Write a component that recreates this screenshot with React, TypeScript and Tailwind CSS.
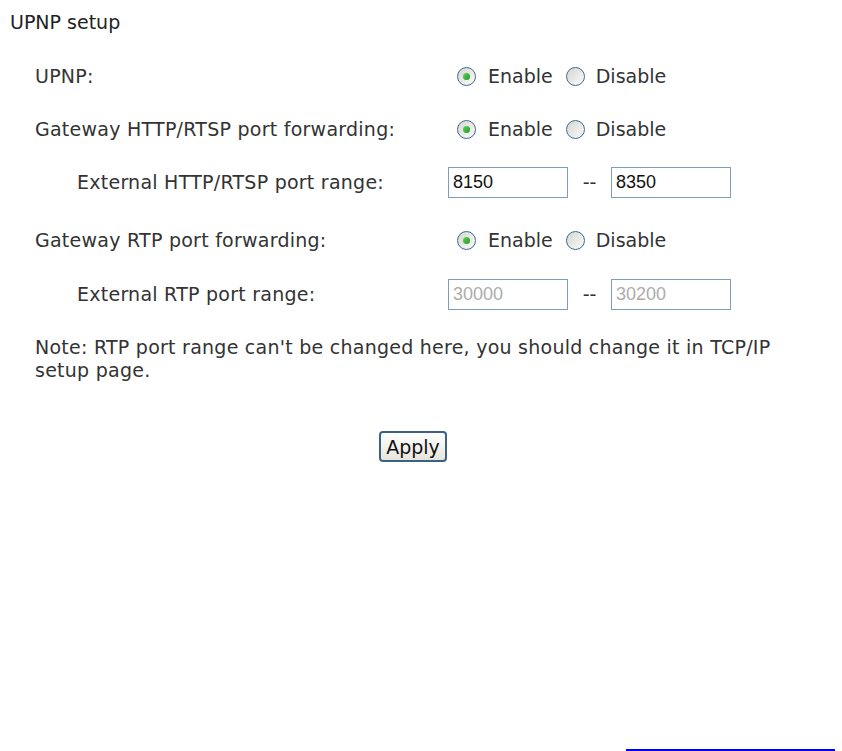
import { useState } from "react";

type Choice = "enable" | "disable";

function Radio({ checked, onClick }: { checked: boolean; onClick: () => void }) {
  return (
    <span
      onClick={onClick}
      className="w-[19px] h-[19px] rounded-full border-[1.5px] border-[#3f6a93] bg-gradient-to-br from-[#d6d6d0] to-[#fbfbfa] flex items-center justify-center cursor-pointer shrink-0"
    >
      {checked && (
        <span className="w-[7px] h-[7px] rounded-full bg-gradient-to-br from-[#5fd35f] to-[#1d9a1d]" />
      )}
    </span>
  );
}

function RadioPair({ value, onChange }: { value: Choice; onChange: (v: Choice) => void }) {
  return (
    <div className="flex items-center">
      <Radio checked={value === "enable"} onClick={() => onChange("enable")} />
      <span className="ml-[12px]">Enable</span>
      <span className="ml-[13px]">
        <Radio checked={value === "disable"} onClick={() => onChange("disable")} />
      </span>
      <span className="ml-[11px]">Disable</span>
    </div>
  );
}

function PortInput({ value, disabled }: { value: string; disabled?: boolean }) {
  return (
    <input
      defaultValue={value}
      disabled={disabled}
      className={
        "w-[120px] h-[31px] border border-[#7f9db9] bg-white pl-[4px] text-[18px] outline-none " +
        (disabled ? "text-[#acacac]" : "text-[#111]")
      }
      style={{ fontFamily: '"Liberation Sans", Arial, sans-serif' }}
    />
  );
}

function PortRange({ from, to, disabled }: { from: string; to: string; disabled?: boolean }) {
  return (
    <div className="flex items-center">
      <PortInput value={from} disabled={disabled} />
      <span className="w-[43px] text-center">--</span>
      <PortInput value={to} disabled={disabled} />
    </div>
  );
}

export default function App() {
  const [upnp, setUpnp] = useState<Choice>("enable");
  const [http, setHttp] = useState<Choice>("enable");
  const [rtp, setRtp] = useState<Choice>("enable");

  return (
    <div
      className="h-[751px] flex flex-col bg-white text-[19px] text-[#333] overflow-hidden"
      style={{ fontFamily: '"DejaVu Sans", Verdana, sans-serif' }}
    >
      <div className="h-[32px] mt-[6px] pl-[10px] flex items-center text-[#222]">UPNP setup</div>

      <div className="mt-[22px] h-[32px] flex items-center">
        <div className="w-[457px] pl-[35px] tracking-[0.25px]">UPNP:</div>
        <RadioPair value={upnp} onChange={setUpnp} />
      </div>

      <div className="mt-[21px] h-[32px] flex items-center">
        <div className="w-[457px] pl-[35px] tracking-[0.25px]">Gateway HTTP/RTSP port forwarding:</div>
        <RadioPair value={http} onChange={setHttp} />
      </div>

      <div className="mt-[21px] h-[32px] flex items-center">
        <div className="w-[448px] pl-[77px] tracking-[0.25px]">External HTTP/RTSP port range:</div>
        <PortRange from="8150" to="8350" />
      </div>

      <div className="mt-[26px] h-[32px] flex items-center">
        <div className="w-[457px] pl-[35px] tracking-[0.25px]">Gateway RTP port forwarding:</div>
        <RadioPair value={rtp} onChange={setRtp} />
      </div>

      <div className="mt-[22px] h-[32px] flex items-center">
        <div className="w-[448px] pl-[77px] tracking-[0.25px]">External RTP port range:</div>
        <PortRange from="30000" to="30200" disabled />
      </div>

      <p className="mt-[26px] pl-[35px] leading-[23px] tracking-[0.25px]">
        Note: RTP port range can't be changed here, you should change it in TCP/IP
        <br />
        setup page.
      </p>

      <div className="mt-[49px] flex justify-center pr-[16px]">
        <button
          className="w-[68px] h-[31px] rounded-[4px] border-2 border-[#3d6184] bg-gradient-to-b from-white to-[#e6e4da] text-[19px] text-[#111]"
          style={{ fontFamily: 'Tahoma, "DejaVu Sans", sans-serif' }}
        >
          Apply
        </button>
      </div>

      <div className="mt-auto ml-[626px] w-[209px] h-[2px] bg-[#0000ff]" />
    </div>
  );
}
